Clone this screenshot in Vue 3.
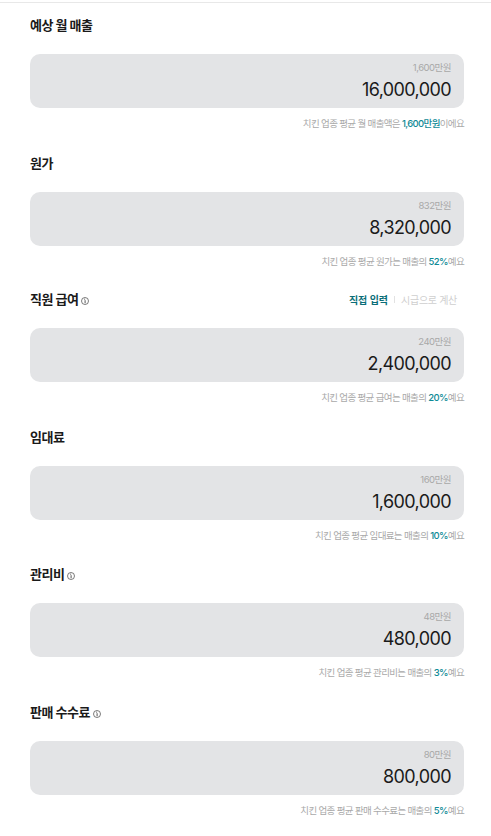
<script setup>
const rows = [
  { title: '예상 월 매출', man: '1,600만원', value: '16,000,000', pre: '치킨 업종 평균 월 매출액은 ', hl: '1,600만원', post: '이에요', gap: 'g138' },
  { title: '원가', man: '832만원', value: '8,320,000', pre: '치킨 업종 평균 원가는 매출의 ', hl: '52%', post: '예요', gap: 'g136' },
  { title: '직원 급여', info: true, toggle: true, man: '240만원', value: '2,400,000', pre: '치킨 업종 평균 급여는 매출의 ', hl: '20%', post: '예요', gap: 'g138' },
  { title: '임대료', man: '160만원', value: '1,600,000', pre: '치킨 업종 평균 임대료는 매출의 ', hl: '10%', post: '예요', gap: 'g137' },
  { title: '관리비', info: true, man: '48만원', value: '480,000', pre: '치킨 업종 평균 관리비는 매출의 ', hl: '3%', post: '예요', gap: 'g138' },
  { title: '판매 수수료', info: true, man: '80만원', value: '800,000', pre: '치킨 업종 평균 판매 수수료는 매출의 ', hl: '5%', post: '예요', gap: 'g138' },
]
</script>

<template>
  <main class="page">
    <section v-for="r in rows" :key="r.title" class="row" :class="r.gap">
      <header class="head">
        <h2 class="title">{{ r.title }}</h2>
        <svg v-if="r.info" class="info" viewBox="0 0 8 8" width="8" height="8" aria-hidden="true">
          <circle cx="4" cy="4" r="3.5" fill="none" stroke="#444" stroke-width="0.7" />
          <path d="M4.1 3.2V6.2M3.2 2.2H4.1" fill="none" stroke="#444" stroke-width="0.9" />
        </svg>
        <div v-if="r.toggle" class="toggle">
          <span class="on">직접 입력</span>
          <span class="sep"></span>
          <span class="off">시급으로 계산</span>
        </div>
      </header>
      <div class="box">
        <div class="man">{{ r.man }}</div>
        <div class="value">{{ r.value }}</div>
      </div>
      <p class="note">{{ r.pre }}<b class="hl">{{ r.hl }}</b>{{ r.post }}</p>
    </section>
  </main>
</template>

<style>
html, body { margin: 0; background: #fff; }
</style>

<style scoped>
.page {
  width: 491px;
  height: 834px;
  overflow: hidden;
  box-sizing: border-box;
  border-top: 1px solid #e8e8e8;
  margin-top: 2px;
  padding: 0 27px 0 30px;
  font-family: Inter, "Noto Sans CJK KR", sans-serif;
  background: #fff;
}
.row { display: flow-root; }
.g138 { height: 138px; }
.g137 { height: 137px; }
.g136 { height: 136px; }
.head {
  display: flex;
  align-items: center;
  height: 20px;
  margin-top: 12px;
  margin-bottom: 19px;
}
.title {
  margin: 0;
  font-size: 13px;
  font-weight: 700;
  line-height: 20px;
  letter-spacing: -0.5px;
  color: #1a1a1a;
}
.info { margin-left: 3px; margin-top: 3px; }
.toggle {
  margin-left: auto;
  margin-right: 7px;
  display: flex;
  align-items: center;
  font-size: 10px;
}
.on { color: #0b6e78; font-weight: 700; }
.off { color: #cfcfcf; letter-spacing: -0.3px; }
.sep { width: 1px; height: 7px; background: #e2e2e2; margin: 1px 6px 0; }
.box {
  height: 54px;
  box-sizing: border-box;
  background: #e3e4e6;
  border-radius: 10px;
  padding: 7px 13px 0;
  text-align: right;
}
.man { font-size: 9.5px; line-height: 14px; color: #a8a8a8; letter-spacing: -0.5px; }
.value { font-size: 18px; font-weight: 400; line-height: 26px; margin-top: 2px; letter-spacing: -0.6px; color: #1a1a1a; }
.note {
  margin: 9px 0 0;
  font-size: 9.5px;
  line-height: 14px;
  text-align: right;
  color: #a9a9a9;
  letter-spacing: -0.65px;
}
.hl { color: #0f8a96; font-weight: 500; }
</style>
